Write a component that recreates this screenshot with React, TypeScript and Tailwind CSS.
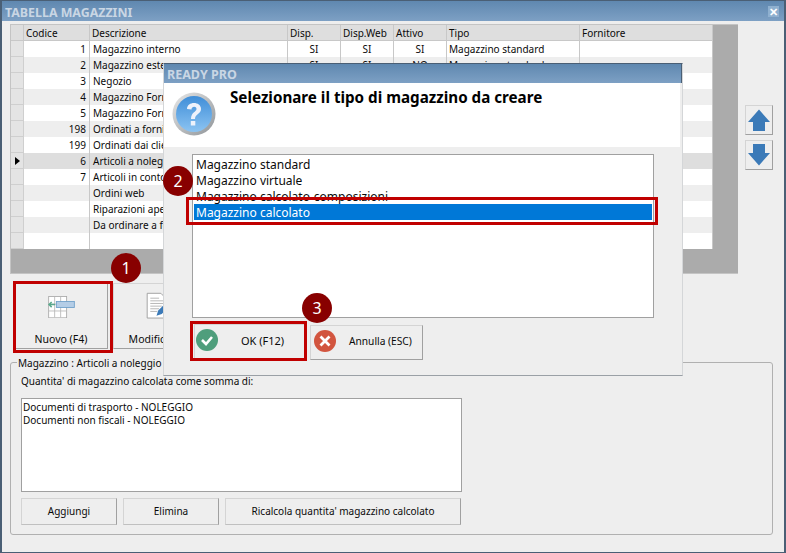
import React from 'react';

const COLS = [
  { label: 'Codice', w: 'w-[66px]' },
  { label: 'Descrizione', w: 'w-[198px]' },
  { label: 'Disp.', w: 'w-[53px]' },
  { label: 'Disp.Web', w: 'w-[53px]' },
  { label: 'Attivo', w: 'w-[53px]' },
  { label: 'Tipo', w: 'w-[133px]' },
  { label: 'Fornitore', w: 'w-[133px]' },
];

const ROWS = [
  ['1', 'Magazzino interno', 'SI', 'SI', 'SI', 'Magazzino standard'],
  ['2', 'Magazzino esterno', 'SI', 'SI', 'NO', 'Magazzino standard'],
  ['3', 'Negozio', '', '', '', ''],
  ['4', 'Magazzino Fornitore', '', '', '', ''],
  ['5', 'Magazzino Fornitore', '', '', '', ''],
  ['198', 'Ordinati a fornitori', '', '', '', ''],
  ['199', 'Ordinati dai clienti', '', '', '', ''],
  ['6', 'Articoli a noleggio', '', '', '', ''],
  ['7', 'Articoli in conto', '', '', '', ''],
  ['', 'Ordini web', '', '', '', ''],
  ['', 'Riparazioni aperte', '', '', '', ''],
  ['', 'Da ordinare a fornitori', '', '', '', ''],
  ['', '', '', '', '', ''],
];

function Badge({ n, className }: { n: number; className: string }) {
  return (
    <div className={`absolute w-[30px] h-[30px] rounded-full bg-[#880000] text-white text-[16px] flex items-center justify-center ${className}`}>
      {n}
    </div>
  );
}

function Grid() {
  return (
    <div className="w-[728px] h-[250px] bg-[#ababab] border border-[#c4c4c4] border-r-0 pr-[25px]">
      <div className="flex h-[15px] bg-[#dedede] border-b border-[#c8c8c8] box-content">
        <div className="w-[13px] border-r border-[#c8c8c8]" />
        {COLS.map((c) => (
          <div key={c.label} className={`${c.w} px-[2px] border-r border-[#c8c8c8] leading-[16px]`}>
            {c.label}
          </div>
        ))}
      </div>
      {ROWS.map((r, i) => {
        const selected = i === 7;
        const bg = selected ? 'bg-[#dedede]' : i % 2 === 0 ? 'bg-white' : 'bg-[#eeeeee]';
        return (
          <div key={i} className={`flex h-[16px] ${bg}`}>
            <div className="w-[13px] bg-[#e4e4e4] border-r border-b border-[#cfcfcf] flex items-center justify-center">
              {selected && <div className="w-0 h-0 border-y-[4px] border-y-transparent border-l-[5px] border-l-black" />}
            </div>
            <div className="w-[66px] pr-[3px] text-right border-r border-[#c8c8c8] leading-[16px]">{r[0]}</div>
            <div className="w-[198px] px-[3px] border-r border-[#c8c8c8] leading-[16px] whitespace-nowrap overflow-hidden">{r[1]}</div>
            <div className="w-[53px] text-center border-r border-[#c8c8c8] leading-[16px]">{r[2]}</div>
            <div className="w-[53px] text-center border-r border-[#c8c8c8] leading-[16px]">{r[3]}</div>
            <div className="w-[53px] text-center border-r border-[#c8c8c8] leading-[16px]">{r[4]}</div>
            <div className="w-[133px] px-[2px] border-r border-[#c8c8c8] leading-[16px] whitespace-nowrap">{r[5]}</div>
            <div className="w-[133px] border-r border-[#c8c8c8]" />
          </div>
        );
      })}
    </div>
  );
}

function ArrowBtn({ down }: { down?: boolean }) {
  return (
    <button className="w-[28px] h-[30px] border border-[#d4d4d4] border-r-[#a0a0a0] border-b-[#a0a0a0] flex items-center justify-center">
      <svg width="24" height="24" viewBox="0 0 24 24" className={down ? 'rotate-180' : ''}>
        <path d="M12 1.500 L23 14 H18 V23 H6 V14 H1 Z" fill="#3b7ab8" />
      </svg>
    </button>
  );
}

function RaisedBtn({ label, className }: { label: string; className: string }) {
  return (
    <button className={`h-[27px] border border-[#d4d4d4] border-r-[#a0a0a0] border-b-[#c0c0c0] flex items-center justify-center ${className}`}>
      {label}
    </button>
  );
}

function NuovoIcon() {
  return (
    <svg width="31" height="26" viewBox="0 0 31 26">
      <rect x="0.500" y="0.500" width="21" height="25" fill="#fff" stroke="#a8a8a8" />
      <path d="M7.500 1V25M14.500 1V25M1 9.500H21M1 17.500H21" stroke="#b8b8b8" />
      <rect x="9.500" y="6.500" width="21" height="7" fill="#b4cde6" stroke="#6d9fc9" />
      <path d="M1 10H8M4 7L1 10L4 13" fill="none" stroke="#5aa88c" strokeWidth="1.800" />
    </svg>
  );
}

function ModificaIcon() {
  return (
    <svg width="32" height="32" viewBox="0 0 32 32">
      <path d="M1.500 1.500H17L23.500 8V29.500H1.500Z" fill="#fff" stroke="#9a9a9a" />
      <path d="M5 7H15M5 10H20M5 13H20M5 16H18M5 19H15M5 22H13" stroke="#b0b0b0" />
      <path d="M12 27L14 21L24 11L28 15L18 25Z" fill="#3b7ab8" />
    </svg>
  );
}

function QuestionIcon() {
  return (
    <svg width="44" height="44" viewBox="0 0 44 44">
      <defs>
        <linearGradient id="ring" x1="0" y1="0" x2="1" y2="1">
          <stop offset="0" stopColor="#e8e8e8" />
          <stop offset="1" stopColor="#8f9498" />
        </linearGradient>
        <linearGradient id="ball" x1="0" y1="0" x2="0" y2="1">
          <stop offset="0" stopColor="#3f8ed8" />
          <stop offset="1" stopColor="#8cc4f2" />
        </linearGradient>
      </defs>
      <circle cx="22" cy="22" r="21.500" fill="url(#ring)" />
      <circle cx="22" cy="22" r="18" fill="url(#ball)" />
      <path d="M15 17C15 9 29 9 29 17C29 22 23 22 23 27H19C19 20 24.500 20 24.500 17C24.500 14 19.500 14 19.500 17.500Z" fill="#eef2fb" />
      <rect x="18.800" y="29" width="4.500" height="4.500" fill="#eef2fb" />
    </svg>
  );
}

function CircleIcon({ kind, className }: { kind: 'ok' | 'cancel'; className: string }) {
  return (
    <svg width="22" height="22" viewBox="0 0 22 22" className={className}>
      <circle cx="11" cy="11" r="11" fill={kind === 'ok' ? '#4f9e7c' : '#d2553f'} />
      {kind === 'ok' ? (
        <path d="M6 11L10 15L16 8" fill="none" stroke="#fff" strokeWidth="2.600" />
      ) : (
        <path d="M6.500 6.500L15.500 15.500M15.500 6.500L6.500 15.500" fill="none" stroke="#fff" strokeWidth="2.800" />
      )}
    </svg>
  );
}

function Dialog() {
  return (
    <div className="absolute left-[161px] top-[62px] w-[520px] h-[313px] bg-[#eeeeee] border border-[#d4d6d8] border-t-[#4a5f75] border-b-[#9aa0a6] flex flex-col">
      <div className="h-[19px] bg-gradient-to-b from-[#5f88b0] to-[#7da0c4] border-r border-[#4a5f75] text-[#c9d6e4] font-bold text-[12.500px] leading-[22px] pl-[3px]">
        READY PRO
      </div>
      <div className="h-[64px] w-[516px] bg-white flex">
        <div className="w-[66px] pl-[8px] pt-[9px]">
          <QuestionIcon />
        </div>
        <div className="text-[15.200px] font-bold leading-[18px] pt-[5px] text-black">
          Selezionare il tipo di magazzino da creare
        </div>
      </div>
      <div className="mt-[7px] ml-[28px] w-[462px] h-[164px] bg-white border border-[#a0a0a0] px-[1px] pt-[1px] text-[12px]">
        <div className="pl-[2px] h-[16px] leading-[18px]">Magazzino standard</div>
        <div className="pl-[2px] h-[16px] leading-[18px]">Magazzino virtuale</div>
        <div className="pl-[2px] h-[16px] leading-[18px]">Magazzino calcolato-composizioni</div>
        <div className="pl-[2px] h-[16px] leading-[18px] bg-[#0078d7] text-white">Magazzino calcolato</div>
      </div>
      <div className="mt-[6px] ml-[30px] flex items-center">
        <button className="w-[111px] h-[36px] border border-[#d4d4d4] border-r-[#a0a0a0] border-b-[#a0a0a0] flex items-center pl-[1px]">
          <CircleIcon kind="ok" className="mb-[4px]" />
          <span className="ml-[23px] pb-[2px] text-[11px]">OK (F12)</span>
        </button>
        <button className="ml-[5px] w-[113px] h-[35px] border border-[#d4d4d4] border-r-[#a0a0a0] border-b-[#a0a0a0] flex items-center pl-[3px]">
          <CircleIcon kind="cancel" className="mb-[2px]" />
          <span className="ml-[13px] pb-[1px] text-[10.200px]">Annulla (ESC)</span>
        </button>
      </div>
    </div>
  );
}

export default function App() {
  return (
    <div className="relative w-[786px] h-[553px] overflow-hidden bg-[#eeeeee] border-x-2 border-y border-[#4a5f75] text-[10px] text-[#0a0a0a] font-['Noto_Sans',sans-serif]">
      {/* Title bar */}
      <div className="h-[20px] bg-gradient-to-b from-[#5f88b0] to-[#7da0c4] flex items-center justify-between pl-[3px] pr-[5px]">
        <span className="font-bold text-[12.400px] text-[#c9d6e4] pt-[4px]">TABELLA MAGAZZINI</span>
        <span className="w-[11px] h-[11px] bg-[#8fb0cf] text-white flex items-center justify-center font-bold text-[11px] leading-none">✕</span>
      </div>

      {/* Grid + arrows */}
      <div className="flex pl-[8px] pt-[3px]">
        <Grid />
        <div className="ml-[7px] pt-[81px] flex flex-col gap-[5px]">
          <ArrowBtn />
          <ArrowBtn down />
        </div>
      </div>

      {/* Toolbar */}
      <div className="flex pl-[12px] pt-[9px] gap-[5px]">
        <button className="w-[94px] h-[66px] border border-[#d4d4d4] border-r-[#a0a0a0] border-b-[#a0a0a0] flex flex-col items-center pt-[12px]">
          <NuovoIcon />
          <span className="mt-[14px] text-[10.500px]">Nuovo (F4)</span>
        </button>
        <button className="w-[94px] h-[66px] border border-[#d4d4d4] border-r-[#a0a0a0] border-b-[#a0a0a0] flex flex-col items-center pt-[8px]">
          <ModificaIcon />
          <span className="mt-[12px] whitespace-nowrap text-[10.500px]">Modifica (F5)</span>
        </button>
      </div>

      {/* Group box */}
      <div className="relative mt-[13px] ml-[8px] w-[763px] h-[173px] border border-[#b0b0b0] rounded-[3px] pl-[10px]">
        <div className="absolute -top-[7px] left-[6px] bg-[#eeeeee] pl-[1px] pr-[2px] leading-[14px]">Magazzino : Articoli a noleggio</div>
        <div className="pt-[11px] h-[35px]">Quantita' di magazzino calcolata come somma di:</div>
        <div className="w-[441px] h-[94px] bg-white border border-[#a0a0a0] px-[1px] pt-[2px] leading-[13px]">
          <div>Documenti di trasporto - NOLEGGIO</div>
          <div>Documenti non fiscali - NOLEGGIO</div>
        </div>
        <div className="flex gap-[6px] mt-[6px]">
          <RaisedBtn label="Aggiungi" className="w-[96px]" />
          <RaisedBtn label="Elimina" className="w-[96px]" />
          <RaisedBtn label="Ricalcola quantita' magazzino calcolato" className="w-[236px]" />
        </div>
      </div>

      <Dialog />

      {/* Highlights */}
      <div className="absolute left-[11px] top-[280px] w-[100px] h-[72px] border-[3px] border-[#c00000]" />
      <div className="absolute left-[184px] top-[196px] w-[472px] h-[28px] border-[3px] border-[#c00000]" />
      <div className="absolute left-[188px] top-[320px] w-[117px] h-[40px] border-[3px] border-[#c00000]" />
      <Badge n={1} className="left-[109px] top-[252px]" />
      <Badge n={2} className="left-[161px] top-[165px]" />
      <Badge n={3} className="left-[300px] top-[292px]" />
    </div>
  );
}
